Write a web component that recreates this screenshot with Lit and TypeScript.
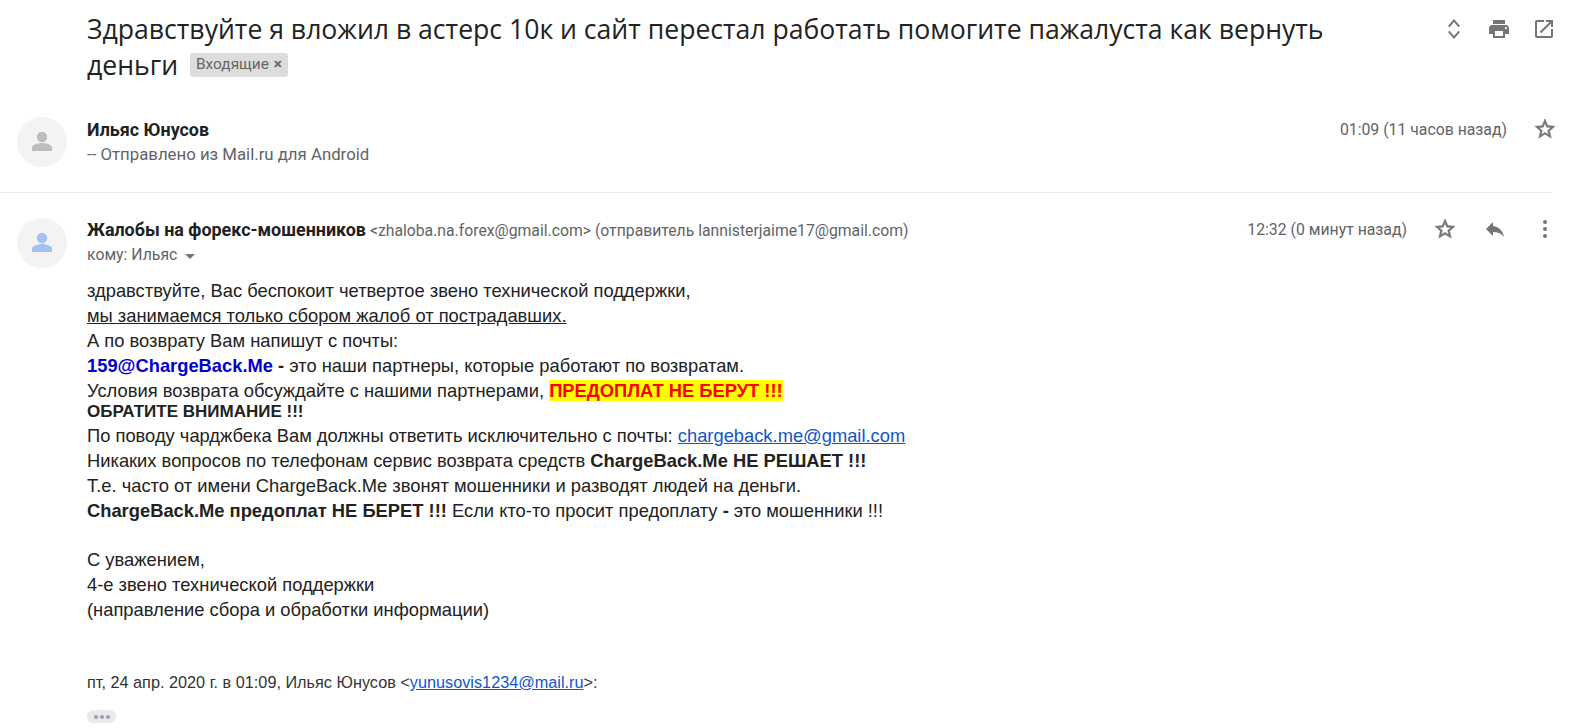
import { LitElement, html, css } from "lit";
import { customElement } from "lit/decorators.js";

const person = html`<svg viewBox="0 0 24 24" width="24" height="24"><circle cx="12" cy="7" r="5.200" /><path d="M2 20v-2.500c0-2.800 6.500-4.500 10-4.500s10 1.700 10 4.500V20c0 .8-.5 1-1 1H3c-.5 0-1-.2-1-1z" /></svg>`;
const star = html`<svg class="icon star" viewBox="0 0 24 24" width="24" height="24"><path d="M22 9.240l-7.190-.62L12 2 9.190 8.630 2 9.240l5.460 4.730L5.820 21 12 17.270 18.180 21l-1.630-7.030L22 9.240zM12 15.400l-3.760 2.270 1-4.280-3.320-2.880 4.380-.38L12 6.100l1.710 4.040 4.380.38-3.320 2.880 1 4.280L12 15.400z" /></svg>`;

@customElement("app-root")
export class AppRoot extends LitElement {
  static styles = css`
    :host {
      display: block;
      height: 728px;
      overflow: hidden;
      background: #fff;
      color: #222;
      font-family: Roboto, "Liberation Sans", sans-serif;
    }

    .icon {
      display: block;
      fill: #757575;
    }

    .star {
      stroke: #757575;
      stroke-width: 0.6;
    }

    .subject {
      display: flex;
      justify-content: space-between;
      padding: 11px 19px 0 87px;
      height: 103px;
      box-sizing: border-box;
    }

    h1 {
      margin: 0;
      width: 1270px;
      font: 400 26.600px/36px "Open Sans", sans-serif;
      color: #222;
    }

    .chip {
      display: inline-block;
      margin-left: 5px;
      padding: 0 6px;
      height: 24px;
      border-radius: 3px;
      background: #dddddd;
      color: #666;
      font: 400 15.400px/22px Roboto, sans-serif;
      vertical-align: 6px;
    }

    .chip b {
      font-weight: 700;
      margin-left: 1px;
    }

    .subject-actions {
      display: flex;
      gap: 21px;
      margin-top: 6px;
      height: 24px;
    }

    .message {
      display: flex;
      padding-left: 17px;
      padding-right: 18px;
    }

    .avatar {
      width: 50px;
      height: 50px;
      flex: none;
      margin-right: 20px;
      border-radius: 50%;
      background: #f3f3f3;
      display: flex;
      align-items: center;
      justify-content: center;
    }

    .avatar svg {
      fill: #bdbdbd;
    }

    .avatar.blue svg {
      fill: #a5c1ee;
    }

    .collapsed {
      height: 89px;
      box-sizing: border-box;
      padding-top: 14px;
    }

    .separator {
      height: 1px;
      background: #ececec;
      margin-right: 23px;
    }

    .open {
      padding-top: 25px;
    }

    .main {
      flex: 1;
      min-width: 0;
    }

    .head {
      display: flex;
      justify-content: space-between;
      align-items: center;
      height: 24px;
    }

    .open .head {
      margin-top: -1px;
    }

    .name {
      font-size: 17.900px;
      font-weight: 700;
      color: #202124;
    }

    .addr {
      font-size: 15.750px;
      color: #5f6368;
    }

    .snippet {
      font-size: 16.800px;
      color: #5f6368;
      line-height: 26px;
    }

    .to {
      display: flex;
      align-items: center;
      font-size: 15.800px;
      color: #5f6368;
      line-height: 24px;
      margin-top: 2px;
    }

    .caret {
      width: 0;
      height: 0;
      margin-left: 8px;
      margin-top: 2px;
      border: 5px solid transparent;
      border-top: 5px solid #757575;
      border-bottom: none;
    }

    .meta {
      display: flex;
      align-items: center;
      font-size: 15.800px;
      color: #5f6368;
    }

    .meta span {
      margin-right: 26px;
    }

    .meta .icon + .icon {
      margin-left: 26px;
    }

    .body {
      font: 18.330px/25px "Liberation Sans", Arial, sans-serif;
      color: #222;
      margin-top: 11px;
      width: 1000px;
    }

    .line {
      height: 25px;
    }

    .short {
      height: 20px;
      font-size: 17px;
      line-height: 18px;
    }

    .gap {
      margin-top: 24px;
    }

    .partner {
      color: #0000cd;
      font-weight: 700;
    }

    .alert {
      color: #f00;
      background: #ff0;
      font-weight: 700;
    }

    a {
      color: #1155cc;
    }

    .quote {
      font: 16.250px/20px "Liberation Sans", Arial, sans-serif;
      margin-top: 50px;
      color: #333;
    }

    .more {
      display: flex;
      gap: 2px;
      align-items: center;
      justify-content: center;
      width: 29px;
      height: 13px;
      margin-top: 18px;
      border-radius: 6px;
      background: #e8eaed;
    }

    .more i {
      width: 4px;
      height: 4px;
      border-radius: 50%;
      background: #9aa0a6;
    }
  `;

  render() {
    return html`
      <div class="subject">
        <h1>
          <span>Здравствуйте я вложил в астерс 10к и сайт перестал работать помогите пажалуста как вернуть</span><br />
          <span>деньги</span>
          <span class="chip">Входящие <b>×</b></span>
        </h1>
        <div class="subject-actions">
          <svg class="icon" viewBox="0 0 24 24" width="24" height="24">
            <path d="M12 2l-6 7 1.500 1.300L12 5l4.500 5.300L18 9zM12 22l6-7-1.500-1.300L12 19l-4.500-5.300L6 15z" />
          </svg>
          <svg class="icon" viewBox="0 0 24 24" width="24" height="24">
            <path d="M19 8H5c-1.660 0-3 1.340-3 3v6h4v4h12v-4h4v-6c0-1.660-1.340-3-3-3zm-3 11H8v-5h8v5zm3-7c-.55 0-1-.45-1-1s.45-1 1-1 1 .45 1 1-.45 1-1 1zm-1-9H6v4h12V3z" />
          </svg>
          <svg class="icon" viewBox="0 0 24 24" width="24" height="24">
            <path d="M19 19H5V5h7V3H5c-1.110 0-2 .9-2 2v14c0 1.100.89 2 2 2h14c1.100 0 2-.9 2-2v-7h-2v7zM14 3v2h3.590l-9.830 9.830 1.410 1.410L19 6.410V10h2V3h-7z" />
          </svg>
        </div>
      </div>

      <div class="message collapsed">
        <div class="avatar">${person}</div>
        <div class="main">
          <div class="head">
            <div class="name">Ильяс Юнусов</div>
            <div class="meta"><span>01:09 (11 часов назад)</span>${star}</div>
          </div>
          <div class="snippet">-- Отправлено из Mail.ru для Android</div>
        </div>
      </div>
      <div class="separator"></div>

      <div class="message open">
        <div class="avatar blue">${person}</div>
        <div class="main">
          <div class="head">
            <div>
              <span class="name">Жалобы на форекс-мошенников</span>
              <span class="addr">&lt;zhaloba.na.forex@gmail.com&gt; (отправитель lannisterjaime17@gmail.com)</span>
            </div>
            <div class="meta">
              <span>12:32 (0 минут назад)</span>${star}
              <svg class="icon" viewBox="0 0 24 24" width="24" height="24">
                <path d="M10 9V5l-7 7 7 7v-4.100c5 0 8.500 1.600 11 5.100-1-5-4-10-11-11z" />
              </svg>
              <svg class="icon" viewBox="0 0 24 24" width="24" height="24">
                <circle cx="12" cy="5" r="2" /><circle cx="12" cy="12" r="2" /><circle cx="12" cy="19" r="2" />
              </svg>
            </div>
          </div>
          <div class="to">кому: Ильяс <span class="caret"></span></div>
          <div class="body">
            <div class="line">здравствуйте, Вас беспокоит четвертое звено технической поддержки,</div>
            <div class="line"><u>мы занимаемся только сбором жалоб от пострадавших.</u></div>
            <div class="line">А по возврату Вам напишут с почты:</div>
            <div class="line"><span class="partner">159@ChargeBack.Me</span> <b>-</b> это наши партнеры, которые работают по возвратам.</div>
            <div class="line">Условия возврата обсуждайте с нашими партнерами, <span class="alert">ПРЕДОПЛАТ НЕ БЕРУТ !!!</span></div>
            <div class="line short"><b>ОБРАТИТЕ ВНИМАНИЕ !!!</b></div>
            <div class="line">По поводу чарджбека Вам должны ответить исключительно с почты: <a href="#">chargeback.me@gmail.com</a></div>
            <div class="line">Никаких вопросов по телефонам сервис возврата средств <b>ChargeBack.Me НЕ РЕШАЕТ !!!</b></div>
            <div class="line">Т.е. часто от имени ChargeBack.Me звонят мошенники и разводят людей на деньги.</div>
            <div class="line"><b>ChargeBack.Me предоплат НЕ БЕРЕТ !!!</b> Если кто-то просит предоплату <b>-</b> это мошенники !!!</div>
            <div class="line gap">С уважением,</div>
            <div class="line">4-е звено технической поддержки</div>
            <div class="line">(направление сбора и обработки информации)</div>
          </div>
          <div class="quote">пт, 24 апр. 2020 г. в 01:09, Ильяс Юнусов &lt;<a href="#">yunusovis1234@mail.ru</a>&gt;:</div>
          <div class="more"><i></i><i></i><i></i></div>
        </div>
      </div>
    `;
  }
}
